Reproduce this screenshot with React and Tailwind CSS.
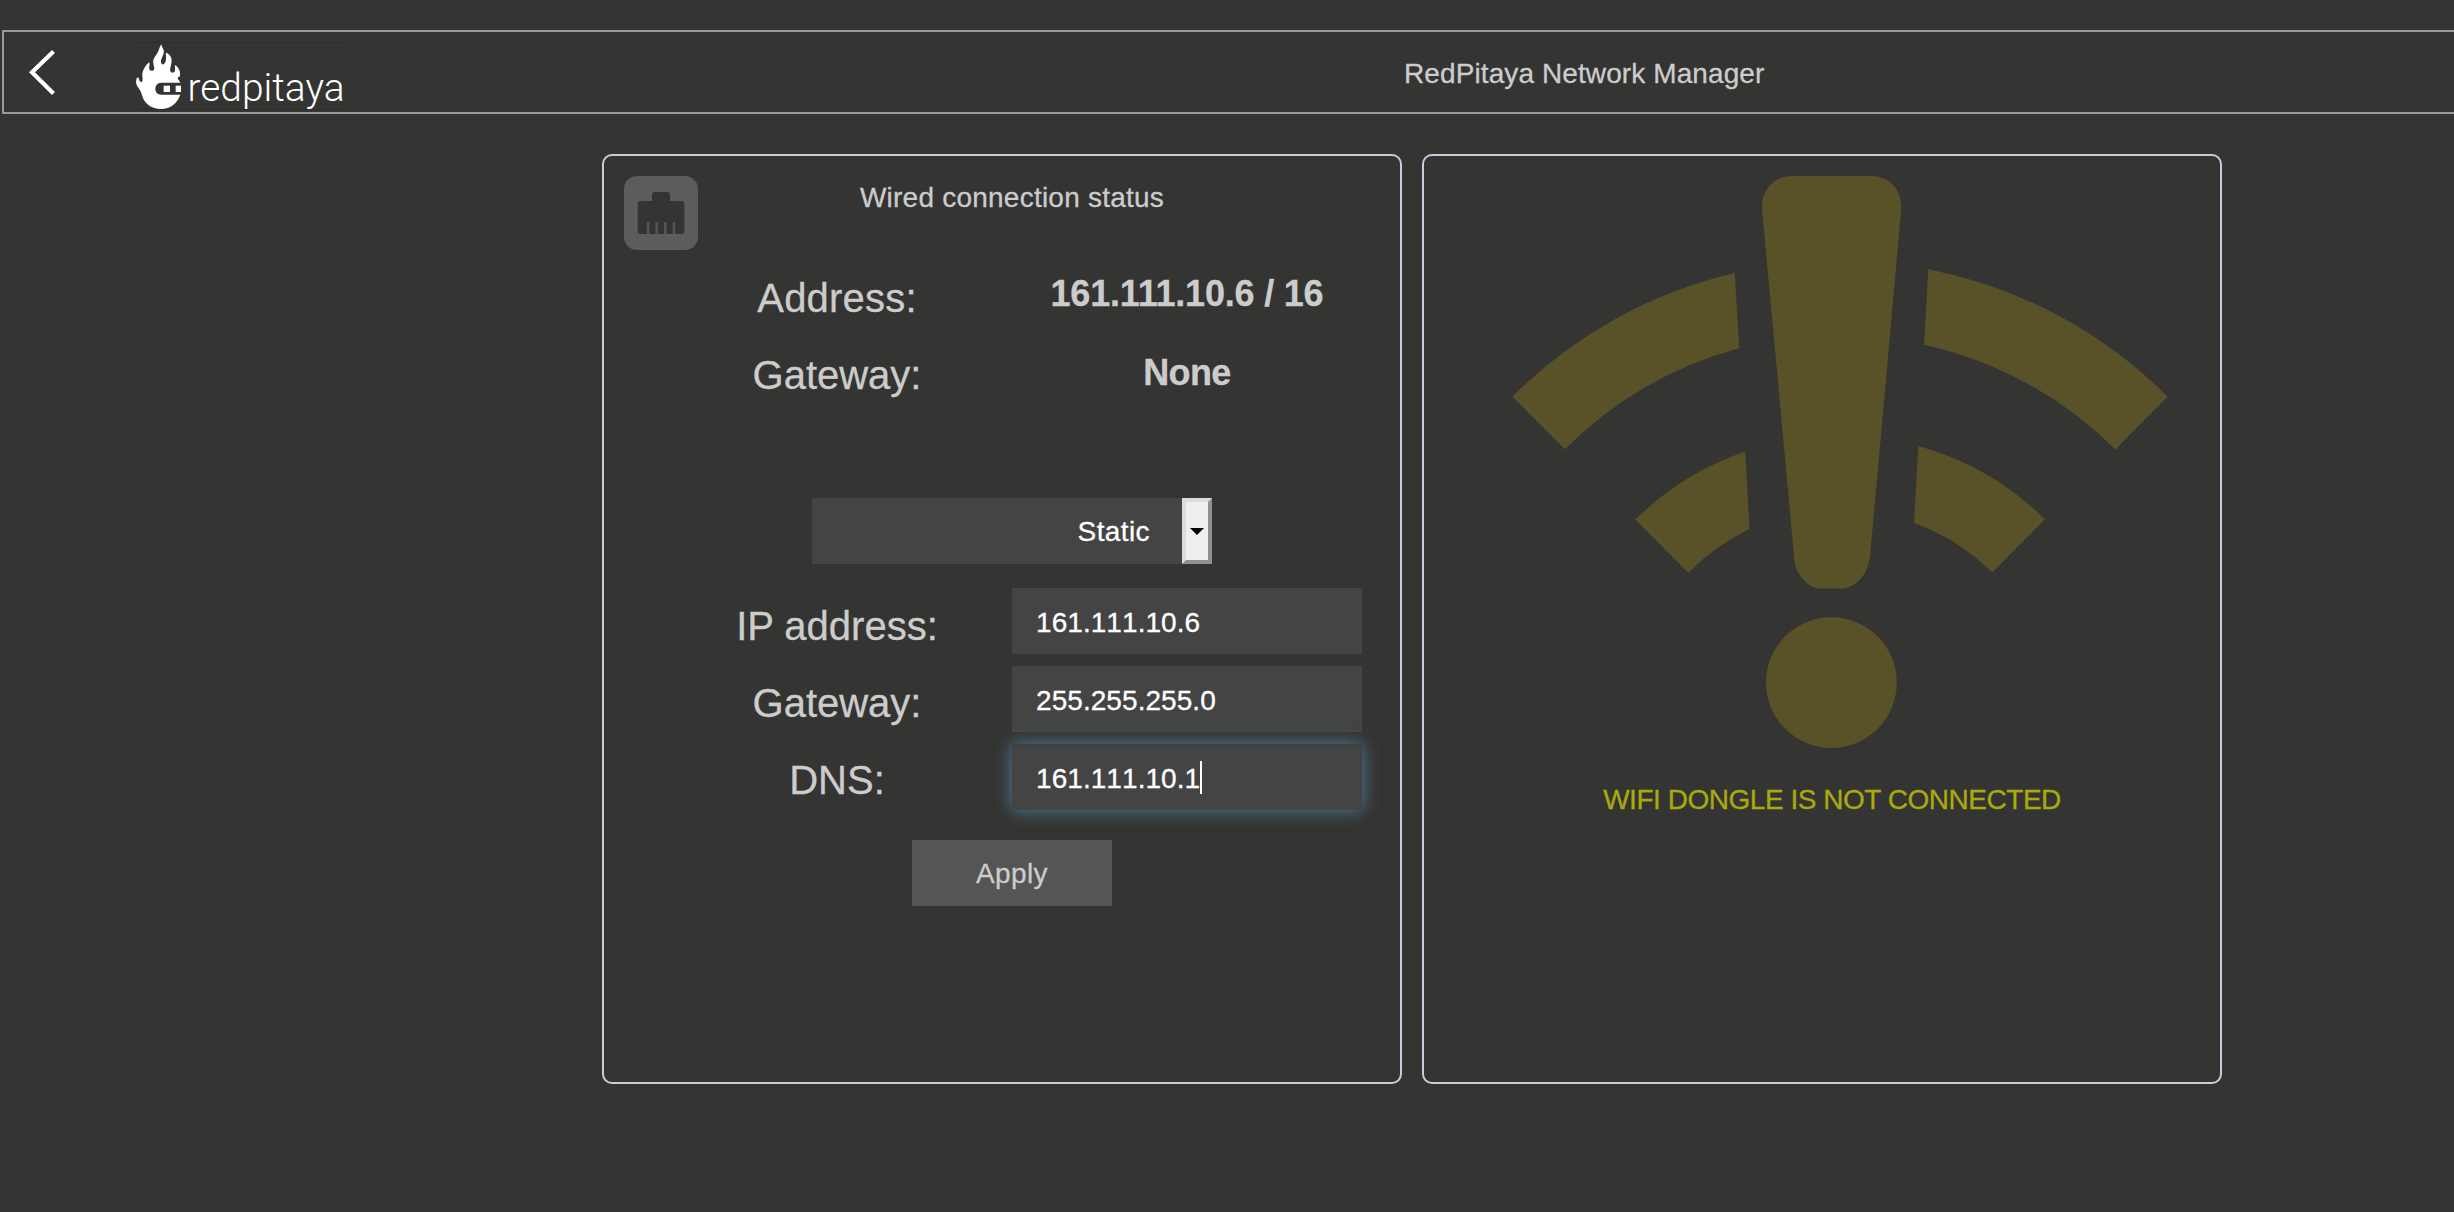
import React from "react";

const STATUS = [
  { label: "Address:", value: "161.111.10.6 / 16", labelCls: "pb-[2px] tracking-[0.2px]", valueCls: "pb-[9px] tracking-[-0.2px]" },
  { label: "Gateway:", value: "None", labelCls: "pb-[2px]", valueCls: "pb-[5px] tracking-[-0.6px]" },
];

const FIELDS = [
  { label: "IP address:", value: "161.111.10.6", labelCls: "pt-[5px]" },
  { label: "Gateway:", value: "255.255.255.0", labelCls: "pt-[4px]" },
  { label: "DNS:", value: "161.111.10.1", labelCls: "pt-[3px]", focused: true },
];

function BackArrow() {
  return (
    <svg className="h-[50px] w-[32px]" viewBox="0 0 32 50" fill="none" stroke="#fff" strokeWidth="4.2">
      <path d="M25.5 4.5 L4 25.2 L25.5 46.5" />
    </svg>
  );
}

function Logo() {
  return (
    <svg className="h-[68px] w-[220px]" viewBox="130 42 220 68">
      <rect x="130.5" y="42.5" width="219" height="67" fill="none" stroke="#2e2e2c" />
      <g transform="translate(0 20) scale(0.33333)">
        <path
          fill="#fff"
          d="M484 73 C478 80 478 92 470 103 C460 116 458 122 461 135 C463 144 465 149 458 152 C450 154 446 148 448 138 C449 133 449 129 447 127 C438 136 426 150 427 168 C428 178 429 187 423 186 C416 184 420 176 413 172 C406 178 407 192 414 202 C422 212 424 219 427 229 C434 252 455 267 483 267 C512 267 532 249 541 224 L484 224 C460 224 460 188 484 188 L541 188 C540 182 533 180 533 173 C534 170 540 173 540 165 C542 150 533 141 526 135 C522 142 529 151 522 157 C514 161 508 154 511 144 C514 132 518 120 511 108 C508 103 503 99 498 98 C496 105 501 113 496 126 C492 137 482 135 483 124 C484 113 494 102 491 91 C489 84 485 81 484 73 Z"
        />
        <rect x="491" y="197" width="19" height="19" fill="#fff" />
        <rect x="527" y="197" width="16" height="19" fill="#fff" />
      </g>
      <text
        x="187.5"
        y="100.5"
        fill="#fff"
        fontSize="39"
        fontWeight="300"
        textLength="157"
        lengthAdjust="spacingAndGlyphs"
        className="font-['Roboto',sans-serif]"
      >
        redpitaya
      </text>
    </svg>
  );
}

function EthernetIcon() {
  return (
    <svg className="h-[74px] w-[74px]" viewBox="0 0 74 74">
      <rect width="74" height="74" rx="13" fill="#5c5c5c" />
      <path
        fill="#343432"
        d="M16.5 25 H28 V19 Q28 16 31 16 H43 Q46 16 46 19 V25 H57.5 Q60.3 25 60.3 28 V55 Q60.3 58 57.5 58 H16.5 Q13.7 58 13.7 55 V28 Q13.7 25 16.5 25 Z"
      />
      <g fill="#545453">
        <rect x="22.8" y="46" width="2.6" height="12" />
        <rect x="31.4" y="46" width="2.6" height="12" />
        <rect x="40" y="46" width="2.6" height="12" />
        <rect x="48.6" y="46" width="2.6" height="12" />
      </g>
    </svg>
  );
}

function WifiAlert() {
  return (
    <svg className="h-[572px] w-[672px]" viewBox="1496 176 672 572" fill="#595128">
      <path d="M1512.3 396.7 A463.4 463.4 0 0 1 1734.7 273 L1739.3 348.3 A389 389 0 0 0 1565 449.3 Z" />
      <path d="M1635.3 519.5 A289.5 289.5 0 0 1 1745.3 451.5 L1749.5 529 A214.5 214.5 0 0 0 1688.3 573 Z" />
      <path d="M1928.3 269.3 A463.4 463.4 0 0 1 2167.7 396.7 L2115.3 449.5 A389 389 0 0 0 1924 344.7 Z" />
      <path d="M1918.3 446 A289.5 289.5 0 0 1 2045 519.3 L1992.3 572.5 A214.5 214.5 0 0 0 1914 523 Z" />
      <path d="M1791.7 176 H1871.7 C1890 176 1902.5 191 1901.3 209 L1870 557 C1868 574 1858 585 1845 588.5 H1818.5 C1806 586 1795.5 574 1794.3 559 L1762 209 C1761 190 1774 176 1791.7 176 Z" />
      <circle cx="1831.4" cy="682.6" r="65.4" />
    </svg>
  );
}

function Panel({ children }) {
  return (
    <section className="flex h-[930px] w-[800px] flex-col items-center rounded-[10px] border-2 border-[#cccbde] pt-5 pl-5">
      {children}
    </section>
  );
}

export default function App() {
  return (
    <div className="h-[1212px] w-full overflow-hidden bg-[#343432] pt-[30px] font-['Liberation_Sans',Arial,sans-serif] text-[28px] text-[#ccc] [-webkit-text-stroke:0.3px]">
      <header className="ml-[2px] flex h-[84px] items-center border-2 border-r-0 border-[#999997]">
        <div className="ml-[24px] shrink-0">
          <BackArrow />
        </div>
        <div className="ml-[70px] shrink-0 pt-2">
          <Logo />
        </div>
        <h1 className="ml-[1054px] pt-[3px] leading-[42px] tracking-[0.1px] whitespace-nowrap">
          RedPitaya Network Manager
        </h1>
      </header>

      <main className="mt-10 ml-[602px] flex gap-5">
        <Panel>
          <div className="grid w-full grid-cols-[74px_1fr_74px]">
            <EthernetIcon />
            <h2 className="pt-px text-center leading-[42px] tracking-[0.23px]">Wired connection status</h2>
          </div>

          <dl className="mt-[10px] w-[700px]">
            {STATUS.map((s) => (
              <div key={s.label} className="grid h-[77px] grid-cols-2 items-center text-center">
                <dt className={"text-[40px] leading-[44px] " + s.labelCls}>{s.label}</dt>
                <dd className={"text-[36px] leading-[40px] font-bold " + s.valueCls}>{s.value}</dd>
              </div>
            ))}
          </dl>

          <div className="mt-[84px] flex h-[66px] w-[400px] bg-[#444]">
            <div className="flex-1 pt-px pr-8 text-right leading-[66px] tracking-[0.4px] text-white">Static</div>
            <div className="flex w-[30px] items-center justify-center border-4 border-t-[#dcdcdc] border-r-[#909090] border-b-[#909090] border-l-[#dcdcdc] bg-[#efefef]">
              <svg className="h-[7px] w-[14px]" viewBox="0 0 14 7">
                <path d="M0 0 H14 L7 7 Z" fill="#000" />
              </svg>
            </div>
          </div>

          <div className="mt-6 flex w-[700px] flex-col gap-3">
            {FIELDS.map((f) => (
              <div key={f.label} className="grid h-[66px] grid-cols-2">
                <div className={"text-center text-[40px] leading-[66px] " + f.labelCls}>{f.label}</div>
                <div
                  className={
                    "flex h-[66px] items-center bg-[#444] pt-[3px] pl-6 tracking-[0.06px] text-white [font-kerning:none] " +
                    (f.focused
                      ? "shadow-[inset_0_2px_2px_rgba(0,0,0,0.075),0_0_16px_rgba(102,175,233,0.6)]"
                      : "")
                  }
                >
                  <span>{f.value}</span>
                  {f.focused && <span className="mb-[2px] h-[33px] w-[2px] bg-white" />}
                </div>
              </div>
            ))}
          </div>

          <button className="mt-[30px] h-[66px] w-[200px] bg-[#555] pt-[2px] tracking-[0.35px]">Apply</button>
        </Panel>

        <Panel>
          <WifiAlert />
          <p className="mt-[31px] leading-[42px] tracking-[-0.47px] text-[#aaaa0d]">WIFI DONGLE IS NOT CONNECTED</p>
        </Panel>
      </main>
    </div>
  );
}
